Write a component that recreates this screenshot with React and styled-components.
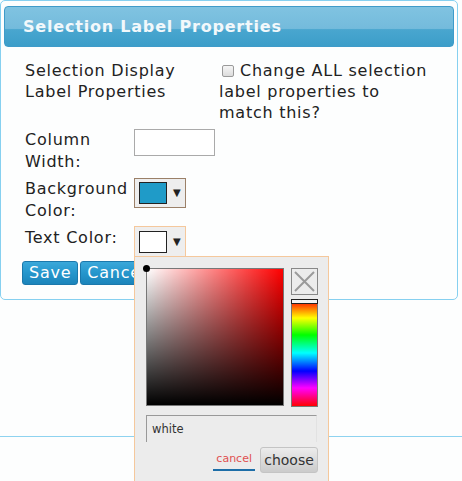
import React from "react";
import styled, { createGlobalStyle } from "styled-components";

const Global = createGlobalStyle`
  html, body { margin: 0; padding: 0; background: #fdfefe; }
  body { font-family: "DejaVu Sans", Verdana, sans-serif; color: #222; }
  * { box-sizing: border-box; }
`;

const Page = styled.div`
  width: 462px;
  height: 481px;
  overflow: hidden;
  position: relative;
`;

const Dialog = styled.div`
  width: 458px;
  border: 1px solid #86d0f0;
  border-radius: 5px;
  padding: 5px 3px 14px;
  background: #fdfefe;
`;

const TitleBar = styled.div`
  height: 41px;
  border: 1px solid #3f9bc9;
  border-radius: 4px;
  background: linear-gradient(#80c3e1 0%, #74bbdc 55%, #49a6cf 58%, #3c9ec9 100%);
  color: #f2f8fb;
  font-weight: bold;
  font-size: 16px;
  letter-spacing: 0.8px;
  display: flex;
  align-items: center;
  padding-left: 18px;
`;

const Body = styled.div`
  padding: 13px 0 0 21px;
`;

const TopRow = styled.div`
  display: flex;
  align-items: flex-start;
  font-size: 16px;
  line-height: 21px;
  letter-spacing: 0.75px;
  margin-bottom: 6px;
`;

const TopLeft = styled.div`
  width: 194px;
`;

const TopRight = styled.label`
  width: 215px;
`;

const Check = styled.input.attrs({ type: "checkbox" })`
  appearance: none;
  width: 12px;
  height: 12px;
  margin: 0 6px 0 3px;
  border: 1px solid #9a9a9a;
  border-radius: 2px;
  background: linear-gradient(#f6f6f6, #dcdcdc);
  vertical-align: -1px;
`;

const Form = styled.div`
  display: grid;
  grid-template-columns: 109px auto;
  row-gap: 5px;
  align-items: start;
  font-size: 16px;
  line-height: 22px;
  letter-spacing: 0.75px;
`;

const Label = styled.div``;

const TextInput = styled.input`
  width: 81px;
  height: 27px;
  border: 1px solid #aaa;
  background: #fff;
  margin: 0;
`;

const PickerWrap = styled.div`
  position: relative;
  width: 52px;
`;

const ColorButton = styled.div`
  width: 52px;
  height: ${(p) => p.$h}px;
  border: 1px solid ${(p) => (p.$active ? "#f5c89c" : "#9b8068")};
  background: #eeeeee;
  display: flex;
  align-items: center;
  padding-left: 4px;
  margin-top: ${(p) => p.$mt || 0}px;
`;

const Swatch = styled.span`
  width: 28px;
  height: 22px;
  border: 1px solid #222;
  background: ${(p) => p.$color};
`;

const Arrow = styled.span`
  font-size: 10px;
  color: #222;
  margin-left: 6px;
`;

const Buttons = styled.div`
  display: flex;
  gap: 2px;
  margin: 4px 0 0 -3px;
`;

const Btn = styled.button`
  height: 24px;
  padding: 0 6px;
  border: 1px solid #1b78ab;
  border-radius: 3px;
  background: linear-gradient(#3aa8da 0%, #2596cc 50%, #1b84ba 100%);
  color: #fff;
  font-family: "DejaVu Sans", Verdana, sans-serif;
  font-size: 16px;
  letter-spacing: 0.75px;
  line-height: 20px;
`;

const Footer = styled.div`
  margin-top: 136px;
  border-top: 1px solid #8ed3f0;
  width: 462px;
`;

const Popup = styled.div`
  position: absolute;
  top: calc(100% - 1px);
  left: 0;
  width: 195px;
  height: 240px;
  background: #ececec;
  border: 1px solid #f5c89c;
  padding: 11px 10px 0 11px;
  z-index: 5;
  line-height: normal;
  letter-spacing: normal;
`;

const PickRow = styled.div`
  display: flex;
  gap: 7px;
`;

const SatBox = styled.div`
  position: relative;
  width: 138px;
  height: 138px;
  border: 1px solid #777;
  background: linear-gradient(to top, #000, rgba(0, 0, 0, 0)),
    linear-gradient(to right, #fff, rgba(255, 255, 255, 0)), #f00;
`;

const Dot = styled.span`
  position: absolute;
  left: -4px;
  top: -4px;
  width: 7px;
  height: 7px;
  border-radius: 50%;
  background: #000;
`;

const SideCol = styled.div`
  display: flex;
  flex-direction: column;
  gap: 4px;
  width: 27px;
`;

const ClearBtn = styled.div`
  width: 27px;
  height: 27px;
  border: 1px solid #888;
  background: #ececec;
  display: flex;
  align-items: center;
  justify-content: center;
`;

const HueBar = styled.div`
  position: relative;
  width: 27px;
  height: 108px;
  border: 1px solid #777;
  background: linear-gradient(
    to bottom,
    #f00 0%,
    #ff0 17%,
    #0f0 33%,
    #0ff 50%,
    #00f 67%,
    #f0f 83%,
    #f00 100%
  );
`;

const HueHandle = styled.span`
  position: absolute;
  left: -1px;
  right: -1px;
  top: -1px;
  height: 5px;
  background: #f4f4f4;
  border: 1px solid #222;
`;

const ValueInput = styled.div`
  margin-top: 8px;
  width: 171px;
  height: 27px;
  border-top: 1px solid #999;
  border-left: 1px solid #999;
  border-right: 1px solid #e2e2e2;
  padding-left: 5px;
  display: flex;
  align-items: center;
  font-size: 11.5px;
  color: #333;
`;

const Actions = styled.div`
  display: flex;
  justify-content: flex-end;
  align-items: flex-start;
  margin-top: 5px;
  width: 172px;
`;

const CancelLink = styled.span`
  color: #e05050;
  font-size: 11px;
  line-height: 13px;
  padding: 0 3px 4px;
  border-bottom: 2px solid #1d6ea8;
  margin-top: 5px;
`;

const ChooseBtn = styled.div`
  width: 58px;
  height: 26px;
  margin-left: 5px;
  border: 1px solid #c4c4c4;
  border-radius: 3px;
  background: linear-gradient(#ececec, #cbcbcb);
  color: #333;
  font-size: 14px;
  display: flex;
  align-items: center;
  justify-content: center;
`;

export default function App() {
  return (
    <Page>
      <Global />
      <Dialog>
        <TitleBar>Selection Label Properties</TitleBar>
        <Body>
          <TopRow>
            <TopLeft>Selection Display Label Properties</TopLeft>
            <TopRight>
              <Check />
              Change ALL selection label properties to match this?
            </TopRight>
          </TopRow>
          <Form>
            <Label>
              Column
              <br />
              Width:
            </Label>
            <TextInput />
            <Label>
              Background
              <br />
              Color:
            </Label>
            <PickerWrap>
              <ColorButton $h={30}>
                <Swatch $color="#1f9bc8" />
                <Arrow>▼</Arrow>
              </ColorButton>
            </PickerWrap>
            <Label>Text Color:</Label>
            <PickerWrap>
              <ColorButton $h={31} $active $mt={-1}>
                <Swatch $color="#ffffff" />
                <Arrow>▼</Arrow>
              </ColorButton>
              <Popup>
                <PickRow>
                  <SatBox>
                    <Dot />
                  </SatBox>
                  <SideCol>
                    <ClearBtn>
                      <svg width="21" height="21" viewBox="0 0 21 21">
                        <path d="M1 1 L20 20 M20 1 L1 20" stroke="#9a9a9a" strokeWidth="2" />
                      </svg>
                    </ClearBtn>
                    <HueBar>
                      <HueHandle />
                    </HueBar>
                  </SideCol>
                </PickRow>
                <ValueInput>white</ValueInput>
                <Actions>
                  <CancelLink>cancel</CancelLink>
                  <ChooseBtn>choose</ChooseBtn>
                </Actions>
              </Popup>
            </PickerWrap>
          </Form>
          <Buttons>
            <Btn>Save</Btn>
            <Btn>Cancel</Btn>
          </Buttons>
        </Body>
      </Dialog>
      <Footer />
    </Page>
  );
}
